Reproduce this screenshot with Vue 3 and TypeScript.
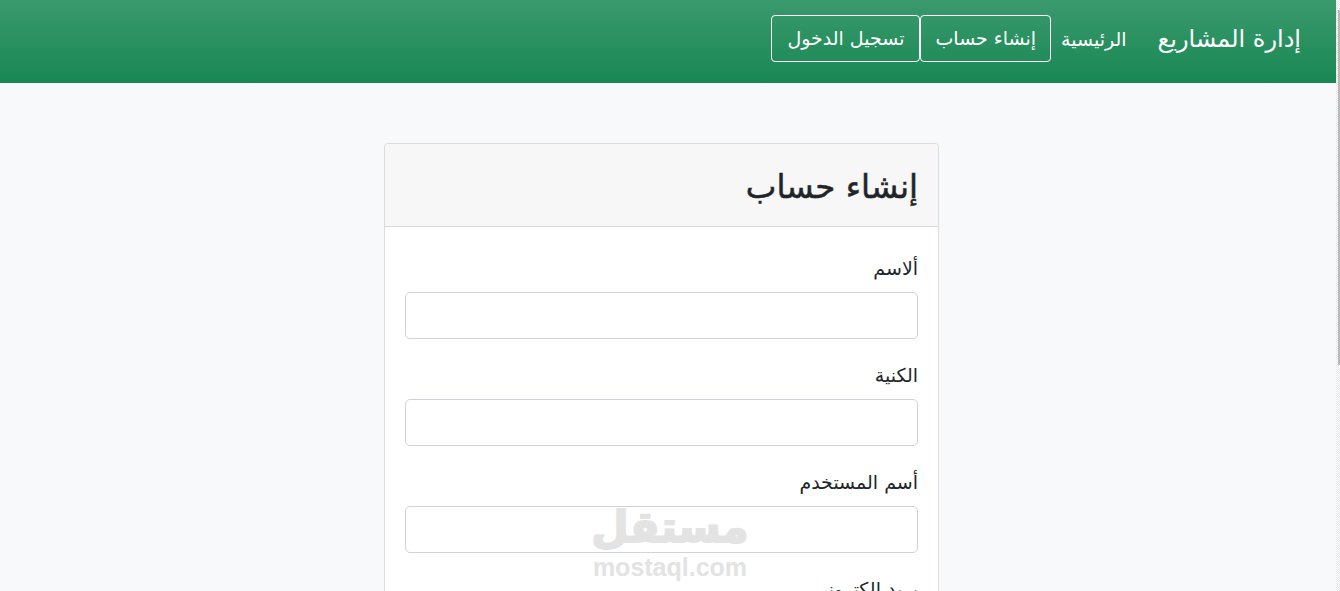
<script setup lang="ts">
const navLinks = ["إنشاء حساب", "تسجيل الدخول"];
const fields = ["ألاسم", "الكنية", "أسم المستخدم"];
</script>

<template>
  <div class="screen">
    <div class="viewport">
      <nav class="navbar">
        <a class="brand">إدارة المشاريع</a>
        <a class="home">الرئيسية</a>
        <a v-for="link in navLinks" :key="link" class="nav-btn">{{ link }}</a>
      </nav>

      <main class="page">
        <section class="card">
          <header class="card-header">
            <h1>إنشاء حساب</h1>
          </header>
          <form class="card-body">
            <div v-for="field in fields" :key="field" class="form-group">
              <label>{{ field }}</label>
              <input type="text" class="form-control" />
            </div>
            <div class="form-group">
              <label>بريد الكتروني</label>
            </div>
          </form>
        </section>
      </main>

      <div class="watermark">
        <span class="wm-ar">مستقل</span>
        <span class="wm-en">mostaql.com</span>
      </div>
    </div>
    <div class="scrollbar">
      <div class="thumb"></div>
    </div>
  </div>
</template>

<style>
html,
body {
  margin: 0;
  height: 591px;
  overflow: hidden;
}
</style>

<style scoped>
.screen {
  display: flex;
  height: 591px;
  overflow: hidden;
  font-family: "DejaVu Sans", "Noto Sans", sans-serif;
  color: #212529;
}

.viewport {
  flex: 1;
  position: relative;
  overflow: hidden;
  background: #f8f9fa;
}

.scrollbar {
  width: 4px;
  box-sizing: border-box;
  padding-top: 10px;
  display: flex;
  justify-content: flex-end;
  align-items: flex-start;
  background: repeating-conic-gradient(#e6e6e6 0 25%, #ffffff 0 50%) 0 0 / 2px 2px;
}

.thumb {
  width: 2px;
  height: 355px;
  background: #b9b9b9;
}

.navbar {
  direction: rtl;
  display: flex;
  align-items: center;
  height: 83px;
  padding: 0 35px 6px 0;
  box-sizing: border-box;
  background: linear-gradient(180deg, #3a9a6d, #198754);
  color: #fff;
}

.brand {
  font-size: 24px;
  margin-left: 31px;
}

.home {
  font-size: 19px;
  margin-left: 10px;
}

.nav-btn {
  font-size: 19px;
  height: 47px;
  line-height: 45px;
  padding: 0 15px;
  box-sizing: border-box;
  border: 1px solid #fff;
  border-radius: 4px;
}

.home + .nav-btn {
  padding: 0 14px;
}

.page {
  padding: 60px 0 0 384px;
}

.card {
  width: 555px;
  box-sizing: border-box;
  direction: rtl;
  background: #fff;
  border: 1px solid #dcdcdc;
  border-radius: 4px;
}

.card-header {
  height: 83px;
  box-sizing: border-box;
  padding: 3px 20px 0;
  display: flex;
  align-items: center;
  background: #f7f7f7;
  border-bottom: 1px solid #d9d9d9;
  border-radius: 4px 4px 0 0;
}

h1 {
  margin: 0;
  font-size: 32.5px;
  font-weight: 500;
  -webkit-text-stroke: 0.5px #212529;
}

.card-body {
  padding: 25px 20px;
}

.form-group {
  margin-bottom: 20px;
}

label {
  display: block;
  height: 40px;
  line-height: 32px;
  font-size: 19px;
}

.form-control {
  display: block;
  width: 100%;
  height: 47px;
  box-sizing: border-box;
  border: 1px solid #ced4da;
  border-radius: 5px;
  background: #fff;
}

.watermark {
  position: absolute;
  left: 590px;
  top: 499px;
  width: 160px;
  display: flex;
  flex-direction: column;
  align-items: center;
  color: #e3e3e3;
  font-weight: 700;
  pointer-events: none;
}

.wm-ar {
  font-size: 43px;
  line-height: 56px;
  -webkit-text-stroke: 2px #e3e3e3;
}

.wm-en {
  font-family: "Liberation Sans", Arial, sans-serif;
  font-size: 25px;
  line-height: 24px;
}
</style>
